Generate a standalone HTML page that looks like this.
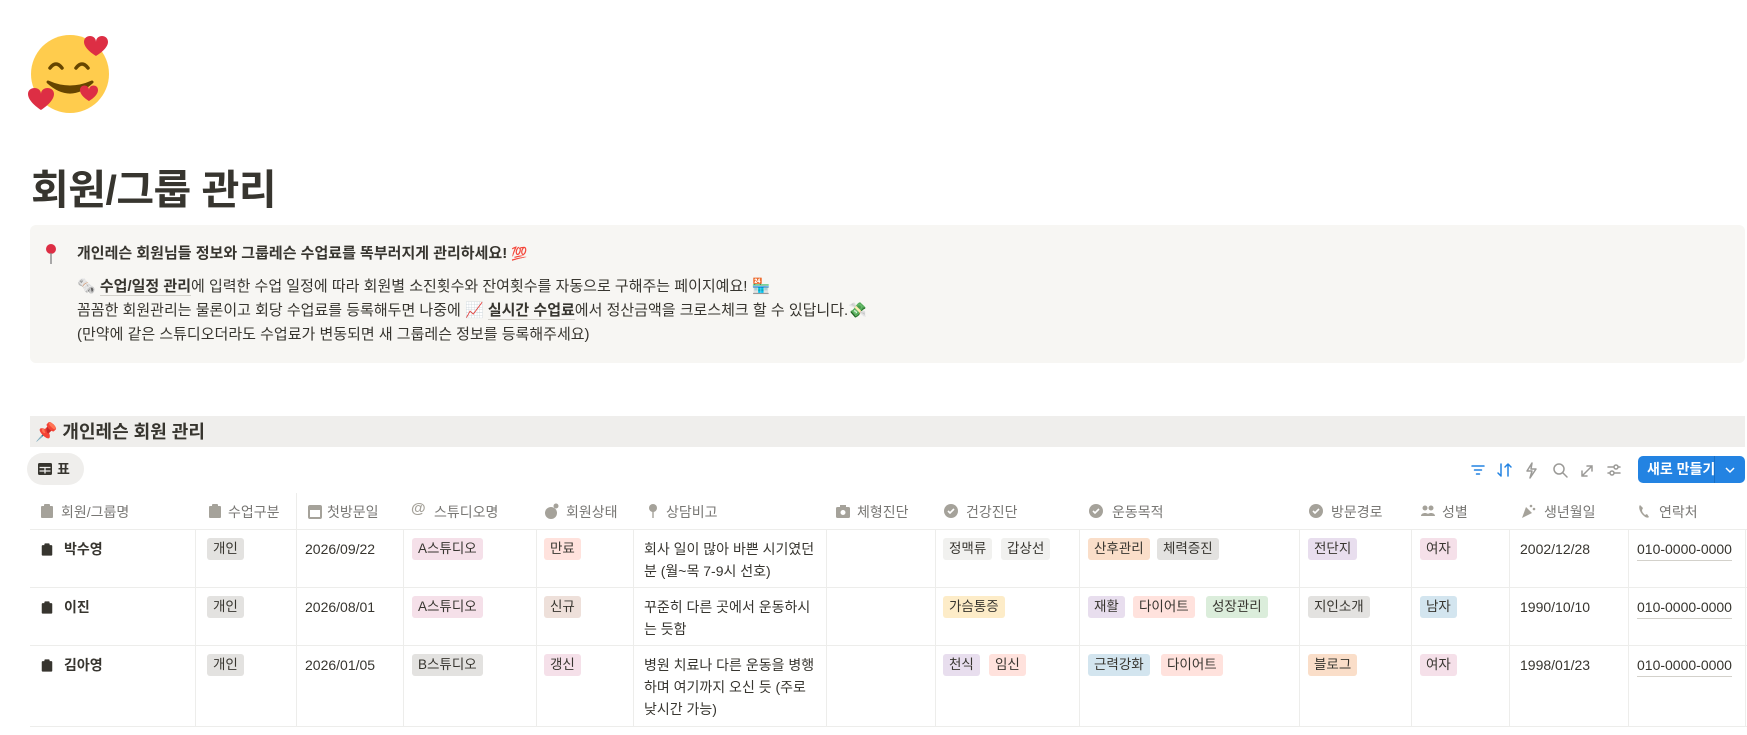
<!DOCTYPE html>
<html><head><meta charset="utf-8">
<style>
*{margin:0;padding:0;box-sizing:border-box}
body{width:1747px;height:735px;overflow:hidden;background:#fff;color:#37352f;font-family:"Liberation Sans","Noto Sans CJK KR",sans-serif;position:relative}
.a{position:absolute;white-space:nowrap}
.title{left:31px;top:156px;font-size:41px;font-weight:700;letter-spacing:-0.5px}
.callout{left:30px;top:225px;width:1715px;height:138px;background:#f7f6f3;border-radius:6px}
.ct{font-size:15px;line-height:24px}
.band{left:30px;top:416px;width:1715px;height:31px;background:#efeeec}
.hd{font-size:14px;color:#787774;top:502px}
.hi{top:503px;width:16px;height:16px}
.c{font-size:14px;line-height:22px}
.tag{position:absolute;font-size:13.5px;line-height:22px;padding:0 6px;border-radius:3px;white-space:nowrap}
.gr{background:#e3e2e0}.lg{background:#f1f1ef}.pk{background:#f5e0e9}.rd{background:#ffe2dd}.br{background:#eee0da}
.or{background:#fadec9}.pu{background:#e8deee}.ye{background:#fdecc8}.gn{background:#dbeddb}.bl{background:#d3e5ef}
.vl{position:absolute;width:1px;background:#ededeb}
.hl{position:absolute;height:1px;background:#ededeb;left:30px;width:1717px}
.ul{border-bottom:1px solid #d3d1cb}
</style></head><body>

<svg class="a" style="left:28px;top:32px" width="88" height="88" viewBox="0 0 88 88">
<circle cx="42" cy="42" r="39" fill="#ffcc4d"/>
<path d="M22 36 q6-8 12 0 M48 36 q6-8 12 0" stroke="#664500" stroke-width="3.5" fill="none" stroke-linecap="round"/>
<path d="M20 50 q22 20 44 0 q-22 10 -44 0z" fill="#664500" stroke="#664500" stroke-width="3" stroke-linejoin="round"/>
<path d="M56 10 c0-8 12-8 12 0 c0-8 12-8 12 0 c0 7-12 14-12 14 c0 0-12-7-12-14z" fill="#dd2e44"/>
<path d="M0 62 c0-8 13-8 13 0 c0-8 13-8 13 0 c0 8-13 16-13 16 c0 0-13-8-13-16z" fill="#dd2e44"/>
<path d="M52 58 c0-6 9-6 9 0 c0-6 9-6 9 0 c0 6-9 11-9 11 c0 0-9-5-9-11z" fill="#dd2e44"/>
</svg>

<div class="a title">회원/그룹 관리</div>

<div class="a callout"></div>
<svg class="a" style="left:45px;top:243px" width="12" height="22" viewBox="0 0 12 22"><circle cx="6" cy="6" r="5" fill="#dd2e44"/><rect x="5.3" y="10" width="1.4" height="11" fill="#888"/></svg>
<div class="a ct" style="left:77px;top:242px;font-weight:700">개인레슨 회원님들 정보와 그룹레슨 수업료를 똑부러지게 관리하세요! <span style="color:#e0245e;font-size:13px">💯</span></div>
<div class="a ct" style="left:77px;top:275px">🗞️ <span class="ul" style="font-weight:700">수업/일정 관리</span>에 입력한 수업 일정에 따라 회원별 소진횟수와 잔여횟수를 자동으로 구해주는 페이지예요! 🏪</div>
<div class="a ct" style="left:77px;top:299px">꼼꼼한 회원관리는 물론이고 회당 수업료를 등록해두면 나중에 📈 <span class="ul" style="font-weight:700">실시간 수업료</span>에서 정산금액을 크로스체크 할 수 있답니다.💸</div>
<div class="a ct" style="left:77px;top:323px">(만약에 같은 스튜디오더라도 수업료가 변동되면 새 그룹레슨 정보를 등록해주세요)</div>

<div class="a band"></div>
<div class="a" style="left:35px;top:420px;font-size:18px;line-height:24px;font-weight:700">📌 개인레슨 회원 관리</div>

<div class="a" style="left:27px;top:453px;width:57px;height:32px;border-radius:16px;background:#efeeec"></div>
<svg class="a" style="left:38px;top:463px" width="14" height="12" viewBox="0 0 14 12"><rect x="0" y="0" width="14" height="12" rx="1.5" fill="#37352f"/><path d="M1.5 4.5h11M7 4.5v6M1.5 8h11" stroke="#efeeec" stroke-width="1.3"/></svg>
<div class="a" style="left:57px;top:459px;font-size:14px;font-weight:700;line-height:20px">표</div>

<svg class="a" style="left:1470px;top:461px" width="160" height="18" viewBox="0 0 160 18" fill="none" stroke-width="1.5" stroke-linecap="round">
<path d="M2 5h12M4.5 9h7M6.5 13h3" stroke="#2383e2"/>
<path d="M31 3v12M28 12l3 3M38 15v-12M35 6l3-3M41 6l-3-3" stroke="#2383e2"/>
<path d="M62 2l-5 8h5l-2 7 6-9h-5z" stroke="#9b9a97" stroke-linejoin="round"/>
<circle cx="89" cy="8" r="5" stroke="#9b9a97"/><path d="M93 12l4 4" stroke="#9b9a97"/>
<path d="M112 15l10-10M117 5h5v5M112 10v5h5" stroke="#9b9a97"/>
<path d="M138 6h12M138 12h12" stroke="#9b9a97"/><circle cx="146" cy="6" r="2" fill="#fff" stroke="#9b9a97"/><circle cx="142" cy="12" r="2" fill="#fff" stroke="#9b9a97"/>
</svg>
<div class="a" style="left:1638px;top:456px;width:107px;height:27px;border-radius:5px;background:#2383e2"></div>
<div class="a" style="left:1714px;top:456px;width:1px;height:27px;background:#1a6fc4"></div>
<div class="a" style="left:1647px;top:459px;color:#fff;font-size:14px;font-weight:700;line-height:21px">새로 만들기</div>
<svg class="a" style="left:1724px;top:465px" width="12" height="10" viewBox="0 0 12 10"><path d="M2 3l4 4 4-4" stroke="#fff" stroke-width="1.5" fill="none"/></svg>

<!-- header -->
<svg class="a hi" style="left:39px" viewBox="0 0 16 16"><rect x="2" y="3" width="12" height="12" rx="1" fill="#a5a29a"/><rect x="5" y="1" width="6" height="4" rx="1" fill="#a5a29a"/></svg>
<div class="a hd" style="left:61px">회원/그룹명</div>
<svg class="a hi" style="left:207px" viewBox="0 0 16 16"><rect x="2" y="3" width="12" height="12" rx="1" fill="#a5a29a"/><rect x="5" y="1" width="6" height="4" rx="1" fill="#a5a29a"/></svg>
<div class="a hd" style="left:228px">수업구분</div>
<svg class="a hi" style="left:307px" viewBox="0 0 16 16"><rect x="2" y="3" width="12" height="12" rx="1" fill="none" stroke="#a5a29a" stroke-width="2"/><rect x="2" y="3" width="12" height="4" fill="#a5a29a"/></svg>
<div class="a hd" style="left:327px">첫방문일</div>
<div class="a hd" style="left:411px;font-weight:700;color:#a5a29a;font-size:15px;top:500px">@</div>
<div class="a hd" style="left:434px">스튜디오명</div>
<svg class="a hi" style="left:544px" viewBox="0 0 16 16"><circle cx="7" cy="10" r="6" fill="#a5a29a"/><circle cx="12" cy="3" r="2.5" fill="#a5a29a"/></svg>
<div class="a hd" style="left:566px">회원상태</div>
<svg class="a hi" style="left:645px" viewBox="0 0 16 16"><circle cx="8" cy="5" r="4" fill="#a5a29a"/><rect x="7.3" y="8" width="1.4" height="7" fill="#a5a29a"/></svg>
<div class="a hd" style="left:666px">상담비고</div>
<svg class="a hi" style="left:835px" viewBox="0 0 16 16"><rect x="1" y="4" width="14" height="11" rx="1.5" fill="#a5a29a"/><rect x="5" y="2" width="6" height="3" fill="#a5a29a"/><circle cx="8" cy="9.5" r="2.5" fill="#fff"/></svg>
<div class="a hd" style="left:857px">체형진단</div>
<svg class="a hi" style="left:943px" viewBox="0 0 16 16"><circle cx="8" cy="8" r="7" fill="#a5a29a"/><path d="M5 8l2 2 4-4" stroke="#fff" stroke-width="1.6" fill="none"/></svg>
<div class="a hd" style="left:966px">건강진단</div>
<svg class="a hi" style="left:1088px" viewBox="0 0 16 16"><circle cx="8" cy="8" r="7" fill="#a5a29a"/><path d="M5 8l2 2 4-4" stroke="#fff" stroke-width="1.6" fill="none"/></svg>
<div class="a hd" style="left:1112px">운동목적</div>
<svg class="a hi" style="left:1308px" viewBox="0 0 16 16"><circle cx="8" cy="8" r="7" fill="#a5a29a"/><path d="M5 8l2 2 4-4" stroke="#fff" stroke-width="1.6" fill="none"/></svg>
<div class="a hd" style="left:1331px">방문경로</div>
<svg class="a hi" style="left:1420px" viewBox="0 0 16 16"><circle cx="5" cy="5" r="2.5" fill="#a5a29a"/><circle cx="11" cy="5" r="2.5" fill="#a5a29a"/><path d="M1 13c0-4 8-4 8 0zM7 13c0-4 8-4 8 0z" fill="#a5a29a"/></svg>
<div class="a hd" style="left:1442px">성별</div>
<svg class="a hi" style="left:1520px" viewBox="0 0 16 16"><path d="M2 15l4-11 6 6z" fill="#a5a29a"/><circle cx="11" cy="3" r="1.3" fill="#a5a29a"/><circle cx="14" cy="6" r="1.3" fill="#a5a29a"/></svg>
<div class="a hd" style="left:1544px">생년월일</div>
<svg class="a hi" style="left:1637px" viewBox="0 0 16 16"><path d="M3 2c-2 2 0 8 4 11 2 2 4 2 5 1l-2-3-2 1c-2-2-3-3-3-5l1-2-3-3z" fill="#a5a29a"/></svg>
<div class="a hd" style="left:1659px">연락처</div>

<!-- grid -->
<div class="hl" style="top:529px"></div>
<div class="hl" style="top:587px"></div>
<div class="hl" style="top:645px"></div>
<div class="hl" style="top:726px"></div>
<div class="vl" style="left:296px;top:493px;height:233px"></div>
<div class="vl" style="left:195px;top:529px;height:197px"></div>
<div class="vl" style="left:403px;top:529px;height:197px"></div>
<div class="vl" style="left:536px;top:529px;height:197px"></div>
<div class="vl" style="left:633px;top:529px;height:197px"></div>
<div class="vl" style="left:826px;top:529px;height:197px"></div>
<div class="vl" style="left:935px;top:529px;height:197px"></div>
<div class="vl" style="left:1079px;top:529px;height:197px"></div>
<div class="vl" style="left:1299px;top:529px;height:197px"></div>
<div class="vl" style="left:1411px;top:529px;height:197px"></div>
<div class="vl" style="left:1509px;top:529px;height:197px"></div>
<div class="vl" style="left:1628px;top:529px;height:197px"></div>
<div class="vl" style="left:1745px;top:529px;height:197px"></div>

<!-- row 1 -->
<svg class="a" style="left:40px;top:542px" width="14" height="15" viewBox="0 0 16 16"><rect x="2" y="3" width="12" height="12" rx="1" fill="#37352f"/><rect x="5" y="1" width="6" height="4" rx="1" fill="#37352f"/></svg>
<div class="a c" style="left:64px;top:538px;font-weight:700">박수영</div>
<span class="tag gr" style="left:207px;top:538px">개인</span>
<div class="a c" style="left:305px;top:538px">2026/09/22</div>
<span class="tag pk" style="left:412px;top:538px">A스튜디오</span>
<span class="tag rd" style="left:544px;top:538px">만료</span>
<div class="a c" style="left:644px;top:538px">회사 일이 많아 바쁜 시기였던<br>분 (월~목 7-9시 선호)</div>
<span class="tag lg" style="left:943px;top:538px">정맥류</span>
<span class="tag lg" style="left:1001px;top:538px">갑상선</span>
<span class="tag or" style="left:1088px;top:538px">산후관리</span>
<span class="tag gr" style="left:1157px;top:538px">체력증진</span>
<span class="tag pu" style="left:1308px;top:538px">전단지</span>
<span class="tag pk" style="left:1420px;top:538px">여자</span>
<div class="a c" style="left:1520px;top:538px">2002/12/28</div>
<div class="a c ul" style="left:1637px;top:538px">010-0000-0000</div>

<!-- row 2 -->
<svg class="a" style="left:40px;top:600px" width="14" height="15" viewBox="0 0 16 16"><rect x="2" y="3" width="12" height="12" rx="1" fill="#37352f"/><rect x="5" y="1" width="6" height="4" rx="1" fill="#37352f"/></svg>
<div class="a c" style="left:64px;top:596px;font-weight:700">이진</div>
<span class="tag gr" style="left:207px;top:596px">개인</span>
<div class="a c" style="left:305px;top:596px">2026/08/01</div>
<span class="tag pk" style="left:412px;top:596px">A스튜디오</span>
<span class="tag br" style="left:544px;top:596px">신규</span>
<div class="a c" style="left:644px;top:596px">꾸준히 다른 곳에서 운동하시<br>는 듯함</div>
<span class="tag ye" style="left:943px;top:596px">가슴통증</span>
<span class="tag pu" style="left:1088px;top:596px">재활</span>
<span class="tag rd" style="left:1133px;top:596px">다이어트</span>
<span class="tag gn" style="left:1206px;top:596px">성장관리</span>
<span class="tag gr" style="left:1308px;top:596px">지인소개</span>
<span class="tag bl" style="left:1420px;top:596px">남자</span>
<div class="a c" style="left:1520px;top:596px">1990/10/10</div>
<div class="a c ul" style="left:1637px;top:596px">010-0000-0000</div>

<!-- row 3 -->
<svg class="a" style="left:40px;top:658px" width="14" height="15" viewBox="0 0 16 16"><rect x="2" y="3" width="12" height="12" rx="1" fill="#37352f"/><rect x="5" y="1" width="6" height="4" rx="1" fill="#37352f"/></svg>
<div class="a c" style="left:64px;top:654px;font-weight:700">김아영</div>
<span class="tag gr" style="left:207px;top:654px">개인</span>
<div class="a c" style="left:305px;top:654px">2026/01/05</div>
<span class="tag gr" style="left:412px;top:654px">B스튜디오</span>
<span class="tag pk" style="left:544px;top:654px">갱신</span>
<div class="a c" style="left:644px;top:654px">병원 치료나 다른 운동을 병행<br>하며 여기까지 오신 듯 (주로<br>낮시간 가능)</div>
<span class="tag pu" style="left:943px;top:654px">천식</span>
<span class="tag rd" style="left:989px;top:654px">임신</span>
<span class="tag bl" style="left:1088px;top:654px">근력강화</span>
<span class="tag rd" style="left:1161px;top:654px">다이어트</span>
<span class="tag or" style="left:1308px;top:654px">블로그</span>
<span class="tag pk" style="left:1420px;top:654px">여자</span>
<div class="a c" style="left:1520px;top:654px">1998/01/23</div>
<div class="a c ul" style="left:1637px;top:654px">010-0000-0000</div>

</body></html>
